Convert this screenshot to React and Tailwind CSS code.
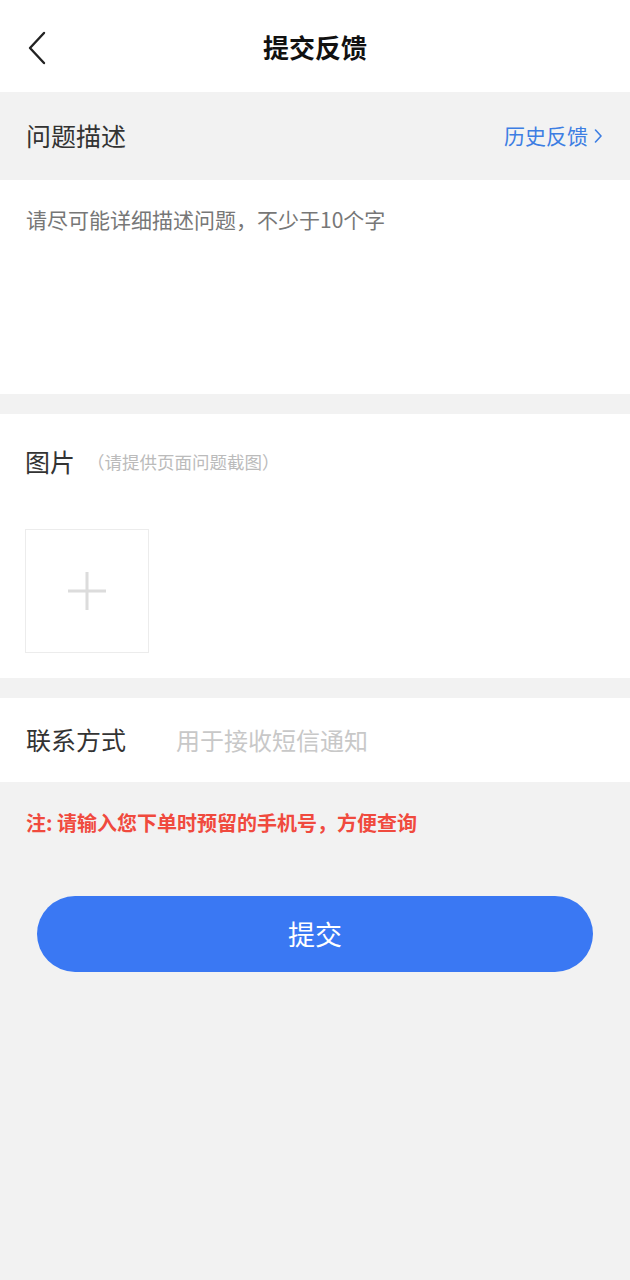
import { useState } from 'react';

export default function App() {
  const [desc, setDesc] = useState('');
  const [phone, setPhone] = useState('');

  return (
    <div
      className="min-h-[1280px] bg-[#f2f2f2]"
      style={{ fontFamily: '"Noto Sans CJK SC", "Noto Sans", sans-serif' }}
    >
      {/* Header */}
      <div className="relative flex h-[92px] items-center justify-center bg-white">
        <button className="absolute left-[22px] top-[26px] p-1">
          <svg width="22" height="36" viewBox="0 0 22 36" fill="none">
            <path d="M18 3 L4 18 L18 33" stroke="#222" strokeWidth="2.4" strokeLinecap="round" strokeLinejoin="round" />
          </svg>
        </button>
        <h1 className="text-[26px] font-bold text-[#111]">提交反馈</h1>
      </div>

      {/* 问题描述 */}
      <div className="flex h-[88px] items-center justify-between pl-[26px] pr-[28px]">
        <span className="text-[25px] text-[#333]">问题描述</span>
        <span className="flex items-center gap-[6px] text-[21px] text-[#3d7ee3]">
          历史反馈
          <svg width="8" height="16" viewBox="0 0 8 16" fill="none">
            <path d="M1.5 2 L7 8 L1.5 14" stroke="#3d7ee3" strokeWidth="1.6" strokeLinecap="round" strokeLinejoin="round" />
          </svg>
        </span>
      </div>
      <div className="h-[214px] bg-white px-[26px] pt-[24px]">
        <textarea
          value={desc}
          onChange={(e) => setDesc(e.target.value)}
          placeholder="请尽可能详细描述问题，不少于10个字"
          className="h-full w-full resize-none text-[21px] leading-[30px] text-[#333] outline-none placeholder:text-[#777]"
        />
      </div>

      {/* 图片 */}
      <div className="mt-[20px] h-[264px] bg-white px-[25px] pt-[29px]">
        <div className="flex items-center">
          <span className="text-[25px] text-[#333]">图片</span>
          <span className="ml-[12px] text-[17.5px] text-[#bbb]">（请提供页面问题截图）</span>
        </div>
        <div className="mt-[48px] flex h-[124px] w-[124px] items-center justify-center border border-[#ececec]">
          <svg width="38" height="38" viewBox="0 0 38 38">
            <rect x="0" y="17.5" width="38" height="3" fill="#dcdcdc" />
            <rect x="17.5" y="0" width="3" height="38" fill="#dcdcdc" />
          </svg>
        </div>
      </div>

      {/* 联系方式 */}
      <div className="mt-[20px] flex h-[84px] items-center bg-white px-[26px]">
        <span className="w-[150px] shrink-0 text-[25px] text-[#333]">联系方式</span>
        <input
          value={phone}
          onChange={(e) => setPhone(e.target.value)}
          placeholder="用于接收短信通知"
          className="flex-1 text-[24px] text-[#333] outline-none placeholder:text-[#c8c8c8]"
        />
      </div>

      <div className="px-[26px] pt-[26px] text-[20px] font-bold text-[#f04a3e]">
        注: 请输入您下单时预留的手机号，方便查询
      </div>

      <div className="px-[37px] pt-[58px]">
        <button className="h-[76px] w-full rounded-full bg-[#3a78f3] text-[27px] text-white">
          提交
        </button>
      </div>
    </div>
  );
}
